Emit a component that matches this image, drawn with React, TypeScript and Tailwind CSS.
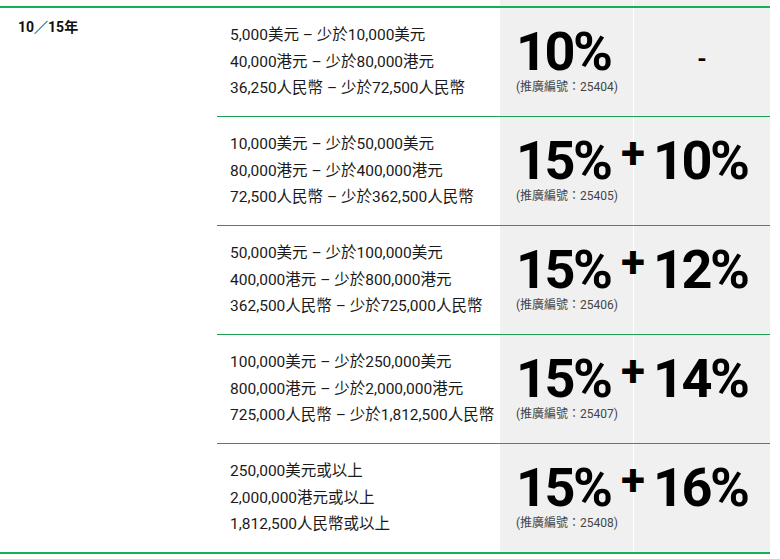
import React from 'react';

interface Tier {
  lines: string[];
  base: string;
  code: string;
  extra?: string;
}

const TIERS: Tier[] = [
  { lines: ['5,000美元 – 少於10,000美元', '40,000港元 – 少於80,000港元', '36,250人民幣 – 少於72,500人民幣'], base: '10%', code: '25404' },
  { lines: ['10,000美元 – 少於50,000美元', '80,000港元 – 少於400,000港元', '72,500人民幣 – 少於362,500人民幣'], base: '15%', code: '25405', extra: '10%' },
  { lines: ['50,000美元 – 少於100,000美元', '400,000港元 – 少於800,000港元', '362,500人民幣 – 少於725,000人民幣'], base: '15%', code: '25406', extra: '12%' },
  { lines: ['100,000美元 – 少於250,000美元', '800,000港元 – 少於2,000,000港元', '725,000人民幣 – 少於1,812,500人民幣'], base: '15%', code: '25407', extra: '14%' },
  { lines: ['250,000美元或以上', '2,000,000港元或以上', '1,812,500人民幣或以上'], base: '15%', code: '25408', extra: '16%' },
];

const FONT = { fontFamily: 'Roboto, "Noto Sans CJK TC", sans-serif' };

function Row({ tier }: { tier: Tier }) {
  return (
    <div className="flex h-[108px]">
      <div className="w-[283px] flex flex-col justify-center pl-[13px] text-[15.5px] leading-[26.5px] text-[#1a1a1a]">
        {tier.lines.map(l => (
          <div key={l}>{l}</div>
        ))}
      </div>
      <div className="w-[133px] bg-[#f0f0f0] flex items-center pl-[16px]">
        <div className="relative z-10 flex items-start mt-[-6px]">
          <div className="flex flex-col">
            <span className="font-bold text-[54px] leading-none tracking-[-2.5px] text-black">{tier.base}</span>
            <span className="text-[12px] leading-[14px] mt-[1px] text-[#444] whitespace-nowrap">(推廣編號：{tier.code})</span>
          </div>
          {tier.extra && (
            <>
              <span className="font-bold text-[44px] leading-[30px] ml-[3px] mt-[4px] text-black">+</span>
              <span className="font-bold text-[54px] leading-none tracking-[-2.5px] ml-[8px] text-black">{tier.extra}</span>
            </>
          )}
        </div>
      </div>
      <div className="w-px bg-white" />
      <div className="w-[136px] bg-[#f0f0f0] flex items-center justify-center">
        {!tier.extra && <span className="font-bold text-[24px] leading-none mb-[6px] text-black">-</span>}
      </div>
    </div>
  );
}

export default function App() {
  return (
    <div className="w-[780px] h-[559px] bg-white" style={FONT}>
      <div className="w-[770px]">
        {/* strip of the table above */}
        <div className="flex h-[6px]">
          <div className="w-[500px]" />
          <div className="w-[133px] bg-[#f0f0f0]" />
          <div className="w-px bg-white" />
          <div className="w-[136px] bg-[#f0f0f0]" />
        </div>
        <div className="h-[2px] bg-[#12b157]" />
        <div className="flex">
          <div className="w-[217px] flex flex-col">
            <div className="flex-1 pl-[18px] pt-[7px]">
              <span className="font-bold text-[14px] text-[#111]">10／15年</span>
            </div>
            <div className="h-[2px] bg-[#12b157]" />
          </div>
          <div className="flex-1">
            {TIERS.map((t, i) => (
              <React.Fragment key={t.code}>
                <Row tier={t} />
                {i < TIERS.length - 1 ? (
                  <div className="h-[1px] bg-[#1d9f57]" />
                ) : (
                  <div className="h-[2px] bg-[#12b157]" />
                )}
              </React.Fragment>
            ))}
          </div>
        </div>
      </div>
    </div>
  );
}
